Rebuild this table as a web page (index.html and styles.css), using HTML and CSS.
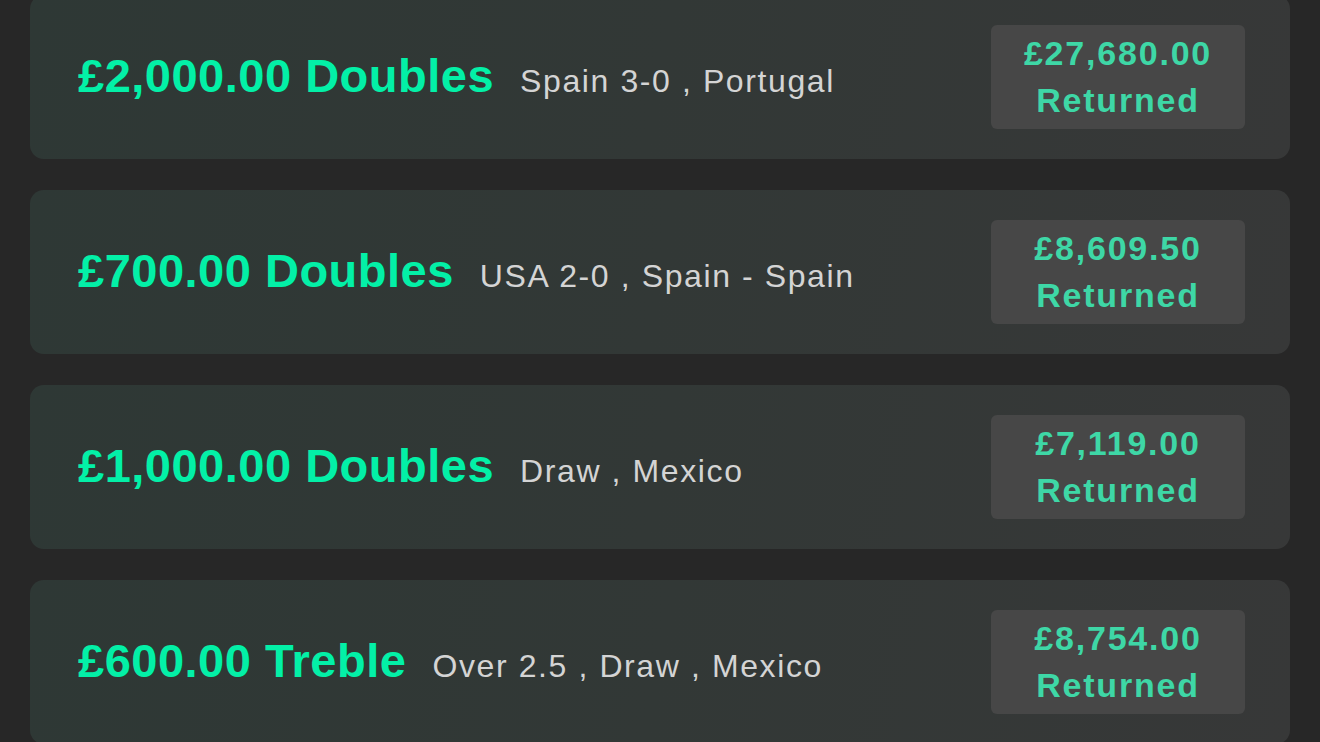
FILE: index.html
```html
<!DOCTYPE html>
<html lang="en">
<head>
<meta charset="utf-8">
<title>Bets</title>
<link rel="stylesheet" href="styles.css">
</head>
<body>
<div class="list">
  <div class="card">
    <div class="info">
      <span class="title">£2,000.00 Doubles</span>
      <span class="sub">Spain 3-0 , Portugal</span>
    </div>
    <div class="badge"><span>£27,680.00</span><span>Returned</span></div>
  </div>
  <div class="card">
    <div class="info">
      <span class="title">£700.00 Doubles</span>
      <span class="sub">USA 2-0 , Spain - Spain</span>
    </div>
    <div class="badge"><span>£8,609.50</span><span>Returned</span></div>
  </div>
  <div class="card">
    <div class="info">
      <span class="title">£1,000.00 Doubles</span>
      <span class="sub">Draw , Mexico</span>
    </div>
    <div class="badge"><span>£7,119.00</span><span>Returned</span></div>
  </div>
  <div class="card">
    <div class="info">
      <span class="title">£600.00 Treble</span>
      <span class="sub">Over 2.5 , Draw , Mexico</span>
    </div>
    <div class="badge"><span>£8,754.00</span><span>Returned</span></div>
  </div>
</div>
</body>
</html>
```
FILE: styles.css
```css
html, body {
  margin: 0;
  padding: 0;
  background: #272727;
  overflow: hidden;
}
body {
  font-family: "Liberation Sans", Arial, sans-serif;
}
.list {
  display: flex;
  flex-direction: column;
  gap: 30.5px;
  padding: 0 30px;
  margin-top: -5.5px;
}
.card {
  height: 164.5px;
  box-sizing: border-box;
  border-radius: 14px;
  background: linear-gradient(100deg, #2e3835 0%, #323836 50%, #373838 100%);
  display: flex;
  align-items: center;
  justify-content: space-between;
  padding: 0 45px 0 48px;
}
.info {
  display: flex;
  align-items: baseline;
  gap: 26px;
  margin-top: -3px;
}
.title {
  color: #03f0a7;
  font-weight: 700;
  font-size: 47px;
  letter-spacing: 0.5px;
}
.sub {
  color: #d4d4d4;
  font-size: 32px;
  letter-spacing: 1.6px;
}
.badge {
  width: 254px;
  height: 104px;
  background: #474747;
  border-radius: 6px;
  display: flex;
  flex-direction: column;
  align-items: center;
  justify-content: center;
  color: #3ed7a6;
  font-weight: 700;
  font-size: 34px;
  line-height: 47px;
  letter-spacing: 1.8px;
}
```
